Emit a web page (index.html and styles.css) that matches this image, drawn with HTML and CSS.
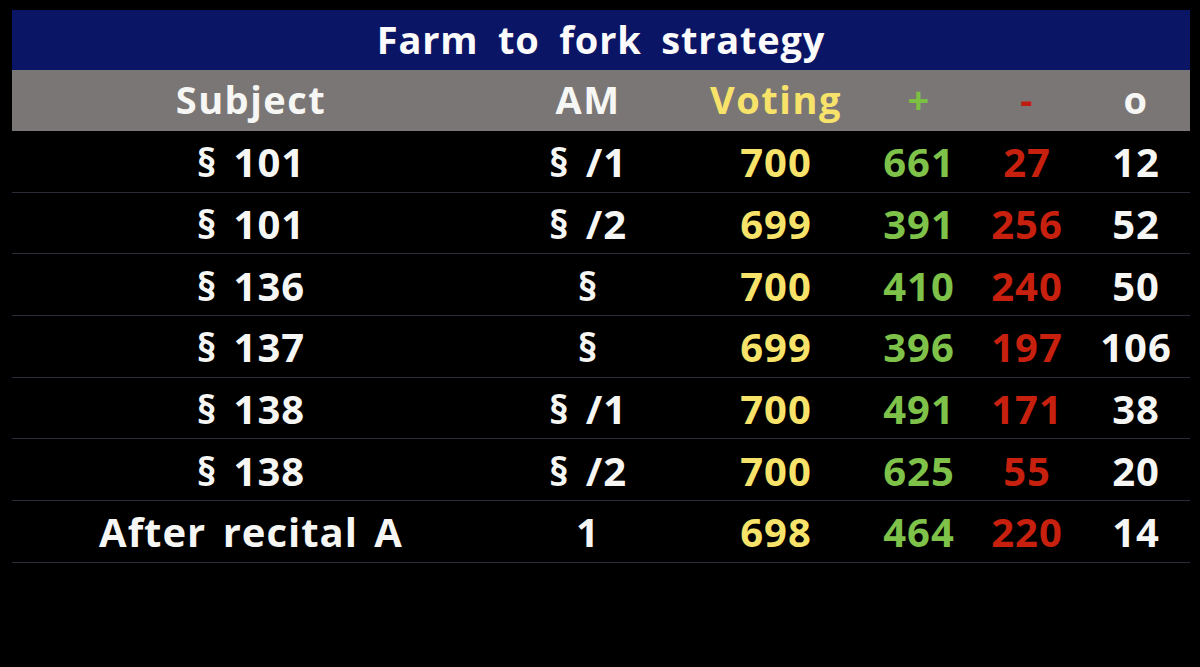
FILE: index.html
```html
<!DOCTYPE html>
<html lang="en">
<head>
<meta charset="utf-8">
<title>Farm to fork strategy</title>
<link rel="stylesheet" href="styles.css">
</head>
<body>
<div class="board">
  <div class="title">Farm to fork strategy</div>
  <div class="row head">
    <div class="c subj">Subject</div>
    <div class="c am">AM</div>
    <div class="c vot yellow">Voting</div>
    <div class="c plus green">+</div>
    <div class="c minus red">-</div>
    <div class="c abst">o</div>
  </div>
  <div class="row">
    <div class="c subj">§ 101</div><div class="c am">§ /1</div><div class="c vot yellow">700</div><div class="c plus green">661</div><div class="c minus red">27</div><div class="c abst">12</div>
  </div>
  <div class="row">
    <div class="c subj">§ 101</div><div class="c am">§ /2</div><div class="c vot yellow">699</div><div class="c plus green">391</div><div class="c minus red">256</div><div class="c abst">52</div>
  </div>
  <div class="row">
    <div class="c subj">§ 136</div><div class="c am">§</div><div class="c vot yellow">700</div><div class="c plus green">410</div><div class="c minus red">240</div><div class="c abst">50</div>
  </div>
  <div class="row">
    <div class="c subj">§ 137</div><div class="c am">§</div><div class="c vot yellow">699</div><div class="c plus green">396</div><div class="c minus red">197</div><div class="c abst">106</div>
  </div>
  <div class="row">
    <div class="c subj">§ 138</div><div class="c am">§ /1</div><div class="c vot yellow">700</div><div class="c plus green">491</div><div class="c minus red">171</div><div class="c abst">38</div>
  </div>
  <div class="row">
    <div class="c subj">§ 138</div><div class="c am">§ /2</div><div class="c vot yellow">700</div><div class="c plus green">625</div><div class="c minus red">55</div><div class="c abst">20</div>
  </div>
  <div class="row">
    <div class="c subj">After recital A</div><div class="c am">1</div><div class="c vot yellow">698</div><div class="c plus green">464</div><div class="c minus red">220</div><div class="c abst">14</div>
  </div>
</div>
</body>
</html>
```

FILE: styles.css
```css
html, body {
  margin: 0;
  padding: 0;
  background: #000;
}
body {
  width: 1200px;
  height: 667px;
  overflow: hidden;
  font-family: "Open Sans", "DejaVu Sans", sans-serif;
  font-weight: 700;
  color: #f6f6f4;
}
.board {
  margin: 10px 10px 0 12px;
  width: 1178px;
}
.title {
  height: 60px;
  background: #0b1566;
  color: #fbfbfb;
  text-align: center;
  font-size: 38px;
  line-height: 58px;
  word-spacing: 9px;
  letter-spacing: 0.8px;
}
.row {
  display: grid;
  grid-template-columns: 478px 196px 180px 106px 110px 108px;
  height: 61.67px;
  box-sizing: border-box;
  border-bottom: 1px solid #2b2b3a;
  align-items: center;
  font-size: 40px;
  letter-spacing: 1px;
  word-spacing: 5px;
}
.row.head {
  background: #7b7676;
  border-bottom: none;
  height: 61px;
  font-size: 38px;
  letter-spacing: 1.5px;
}
.c {
  text-align: center;
  line-height: 1;
  padding-top: 2px;
}
.head .c {
  padding-top: 0;
  padding-bottom: 4px;
}
.yellow { color: #f8e36a; }
.green { color: #7ec24a; }
.red { color: #c8200e; }
.head .red { color: #c01c12; }
.head .green { color: #7cc043; }
```
